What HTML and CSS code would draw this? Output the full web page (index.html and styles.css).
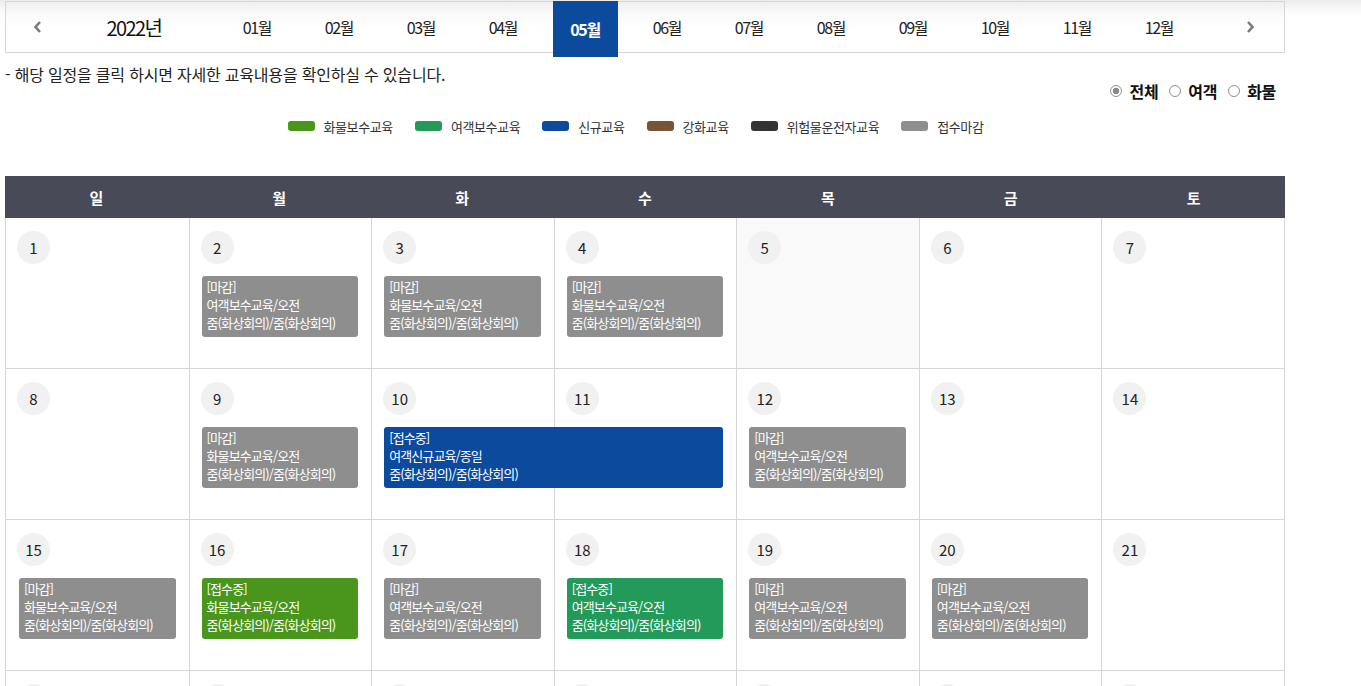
FILE: index.html
```html
<!DOCTYPE html>
<html lang="ko">
<head>
<meta charset="utf-8">
<title>교육일정</title>
<link rel="stylesheet" href="styles.css">
</head>
<body>
<div class="page">
  <div class="monthbar">
    <a class="arrow prev" href="#"><svg width="10" height="14" viewBox="0 0 10 14"><polyline points="7,2 2.5,7 7,12" fill="none" stroke="#7a7a7a" stroke-width="2.6"/></svg></a>
    <div class="year">2022년</div>
    <ul class="months">
      <li><a href="#">01월</a></li>
      <li><a href="#">02월</a></li>
      <li><a href="#">03월</a></li>
      <li><a href="#">04월</a></li>
      <li class="on"><a href="#">05월</a></li>
      <li><a href="#">06월</a></li>
      <li><a href="#">07월</a></li>
      <li><a href="#">08월</a></li>
      <li><a href="#">09월</a></li>
      <li><a href="#">10월</a></li>
      <li><a href="#">11월</a></li>
      <li><a href="#">12월</a></li>
    </ul>
    <a class="arrow next" href="#"><svg width="10" height="14" viewBox="0 0 10 14"><polyline points="3,2 7.5,7 3,12" fill="none" stroke="#7a7a7a" stroke-width="2.6"/></svg></a>
  </div>

  <p class="notice">- 해당 일정을 클릭 하시면 자세한 교육내용을 확인하실 수 있습니다.</p>

  <div class="filter">
    <label class="radio checked"><span class="dot"></span>전체</label>
    <label class="radio"><span class="dot"></span>여객</label>
    <label class="radio"><span class="dot"></span>화물</label>
  </div>

  <ul class="legend">
    <li><span class="sw c-cargo"></span>화물보수교육</li>
    <li><span class="sw c-pass"></span>여객보수교육</li>
    <li><span class="sw c-new"></span>신규교육</li>
    <li><span class="sw c-brown"></span>강화교육</li>
    <li><span class="sw c-black"></span>위험물운전자교육</li>
    <li><span class="sw c-gray"></span>접수마감</li>
  </ul>

  <div class="calendar">
    <div class="head">
      <div>일</div><div>월</div><div>화</div><div>수</div><div>목</div><div>금</div><div>토</div>
    </div>

    <div class="week">
      <div class="day d1"><span class="num">1</span></div>
      <div class="day d2"><span class="num">2</span></div>
      <div class="day d3"><span class="num">3</span></div>
      <div class="day d4"><span class="num">4</span></div>
      <div class="day d5 shade"><span class="num">5</span></div>
      <div class="day d6"><span class="num">6</span></div>
      <div class="day d7"><span class="num">7</span></div>
      <a class="ev c-gray s2" href="#">[마감]<br>여객보수교육/오전<br>줌(화상회의)/줌(화상회의)</a>
      <a class="ev c-gray s3" href="#">[마감]<br>화물보수교육/오전<br>줌(화상회의)/줌(화상회의)</a>
      <a class="ev c-gray s4" href="#">[마감]<br>화물보수교육/오전<br>줌(화상회의)/줌(화상회의)</a>
    </div>

    <div class="week">
      <div class="day d1"><span class="num">8</span></div>
      <div class="day d2"><span class="num">9</span></div>
      <div class="day d3"><span class="num">10</span></div>
      <div class="day d4"><span class="num">11</span></div>
      <div class="day d5"><span class="num">12</span></div>
      <div class="day d6"><span class="num">13</span></div>
      <div class="day d7"><span class="num">14</span></div>
      <a class="ev c-gray s2" href="#">[마감]<br>화물보수교육/오전<br>줌(화상회의)/줌(화상회의)</a>
      <a class="ev c-new s3 span2" href="#">[접수중]<br>여객신규교육/종일<br>줌(화상회의)/줌(화상회의)</a>
      <a class="ev c-gray s5" href="#">[마감]<br>여객보수교육/오전<br>줌(화상회의)/줌(화상회의)</a>
    </div>

    <div class="week">
      <div class="day d1"><span class="num">15</span></div>
      <div class="day d2"><span class="num">16</span></div>
      <div class="day d3"><span class="num">17</span></div>
      <div class="day d4"><span class="num">18</span></div>
      <div class="day d5"><span class="num">19</span></div>
      <div class="day d6"><span class="num">20</span></div>
      <div class="day d7"><span class="num">21</span></div>
      <a class="ev c-gray s1" href="#">[마감]<br>화물보수교육/오전<br>줌(화상회의)/줌(화상회의)</a>
      <a class="ev c-cargo s2" href="#">[접수중]<br>화물보수교육/오전<br>줌(화상회의)/줌(화상회의)</a>
      <a class="ev c-gray s3" href="#">[마감]<br>여객보수교육/오전<br>줌(화상회의)/줌(화상회의)</a>
      <a class="ev c-pass s4" href="#">[접수중]<br>여객보수교육/오전<br>줌(화상회의)/줌(화상회의)</a>
      <a class="ev c-gray s5" href="#">[마감]<br>여객보수교육/오전<br>줌(화상회의)/줌(화상회의)</a>
      <a class="ev c-gray s6" href="#">[마감]<br>여객보수교육/오전<br>줌(화상회의)/줌(화상회의)</a>
    </div>

    <div class="week">
      <div class="day d1"><span class="num">22</span></div>
      <div class="day d2"><span class="num">23</span></div>
      <div class="day d3"><span class="num">24</span></div>
      <div class="day d4"><span class="num">25</span></div>
      <div class="day d5"><span class="num">26</span></div>
      <div class="day d6"><span class="num">27</span></div>
      <div class="day d7"><span class="num">28</span></div>
    </div>

    <div class="week">
      <div class="day d1"><span class="num">29</span></div>
      <div class="day d2"><span class="num">30</span></div>
      <div class="day d3"><span class="num">31</span></div>
      <div class="day d4"></div>
      <div class="day d5"></div>
      <div class="day d6"></div>
      <div class="day d7"></div>
    </div>
  </div>
</div>
</body>
</html>
```

FILE: styles.css
```css
* { box-sizing: border-box; }
html, body { margin: 0; padding: 0; }
body {
  font-family: "Noto Sans CJK KR", "Noto Sans", sans-serif;
  color: #333;
  background: linear-gradient(#ececec 0, #fafafa 10px, #fff 16px) no-repeat;
  background-color: #fff;
}
a { text-decoration: none; color: inherit; }
ul { list-style: none; margin: 0; padding: 0; }

.page {
  width: 1280px;
  margin: 1px 0 0 5px;
}

/* month bar */
.monthbar {
  display: flex;
  align-items: stretch;
  height: 52px;
  border: 1px solid #d6d6d6;
  background: linear-gradient(#efefef 0, #fbfbfb 14px, #fff 26px);
}
.arrow {
  display: flex;
  align-items: center;
  justify-content: center;
}
.arrow.prev { width: 64px; }
.arrow.next { flex: 1; padding-left: 16px; }
.year {
  width: 128px;
  display: flex;
  align-items: center;
  justify-content: center;
  font-size: 20px;
  letter-spacing: -1.6px;
  color: #111;
}
.months {
  display: flex;
  margin-left: 18px;
}
.months li {
  width: 82px;
  display: flex;
  justify-content: center;
}
.months a {
  width: 65px;
  display: flex;
  align-items: center;
  justify-content: center;
  font-size: 16px;
  letter-spacing: -1.3px;
  color: #222;
}
.months li.on a {
  background: #0b4a9d;
  color: #fff;
  font-weight: 700;
  margin-top: -1px;
  margin-bottom: -5px;
}

/* notice */
.notice {
  margin: 9px 0 0 0;
  font-size: 16px;
  line-height: 24px;
  letter-spacing: -0.2px;
  color: #222;
}

.filter {
  display: flex;
  justify-content: flex-end;
  gap: 11px;
  padding-right: 9px;
  margin-top: -7px;
  height: 24px;
  align-items: center;
}
.radio {
  display: flex;
  align-items: center;
  font-size: 16px;
  font-weight: 700;
  color: #111;
  letter-spacing: -0.3px;
}
.radio .dot {
  width: 12px;
  height: 12px;
  border: 1px solid #8f8f8f;
  border-radius: 50%;
  margin-right: 7px;
  background: #fff;
}
.radio.checked .dot {
  background: radial-gradient(circle, #8a8a8a 0 3px, #fff 3.6px);
}

/* legend */
.legend {
  display: flex;
  justify-content: center;
  gap: 22px;
  margin-top: 12px;
  padding-right: 19px;
  height: 22px;
  align-items: center;
}
.legend li {
  display: flex;
  align-items: center;
  font-size: 13px;
  letter-spacing: -0.4px;
  color: #333;
}
.sw {
  width: 27px;
  height: 10px;
  border-radius: 3px;
  margin-right: 9px;
}

.c-cargo { background: #4a951b; }
.c-pass { background: #239a59; }
.c-new { background: #0b4a9d; }
.c-brown { background: #7a5335; }
.c-black { background: #333; }
.c-gray { background: #8e8e8e; }

/* calendar */
.calendar {
  margin-top: 39px;
  border-left: 1px solid #d6d6d6;
  border-right: 1px solid #d6d6d6;
}
.head {
  display: grid;
  grid-template-columns: repeat(7, 1fr);
  height: 42px;
  background: #484a57;
  margin: 0 -1px;
}
.head div {
  display: flex;
  align-items: center;
  justify-content: center;
  color: #fff;
  font-size: 15px;
  font-weight: 700;
}
.week {
  display: grid;
  grid-template-columns: repeat(7, 1fr);
  grid-template-rows: 150px;
  border-bottom: 1px solid #d6d6d6;
}
.day {
  grid-row: 1;
  padding: 13px 0 0 11px;
  border-left: 1px solid #d6d6d6;
}
.day.d1 { grid-column: 1; border-left: 0; }
.day.d2 { grid-column: 2; }
.day.d3 { grid-column: 3; }
.day.d4 { grid-column: 4; }
.day.d5 { grid-column: 5; }
.day.d6 { grid-column: 6; }
.day.d7 { grid-column: 7; }
.day.shade { background: #f9f9f9; }
.num {
  display: flex;
  width: 33px;
  height: 33px;
  border-radius: 50%;
  background: #f1f1f1;
  align-items: center;
  justify-content: center;
  font-size: 15px;
  color: #222;
}

.ev {
  grid-row: 1;
  align-self: start;
  margin: 58px 13px 0 13px;
  height: 61px;
  border-radius: 3px;
  padding: 2px 5px 0;
  color: #fff;
  font-size: 13px;
  line-height: 18px;
  letter-spacing: -0.9px;
  z-index: 1;
}
.ev.s1 { grid-column: 1; }
.ev.s2 { grid-column: 2; }
.ev.s3 { grid-column: 3; }
.ev.s4 { grid-column: 4; }
.ev.s5 { grid-column: 5; }
.ev.s6 { grid-column: 6; }
.ev.s7 { grid-column: 7; }
.ev.span2 { grid-column-end: span 2; }
```
